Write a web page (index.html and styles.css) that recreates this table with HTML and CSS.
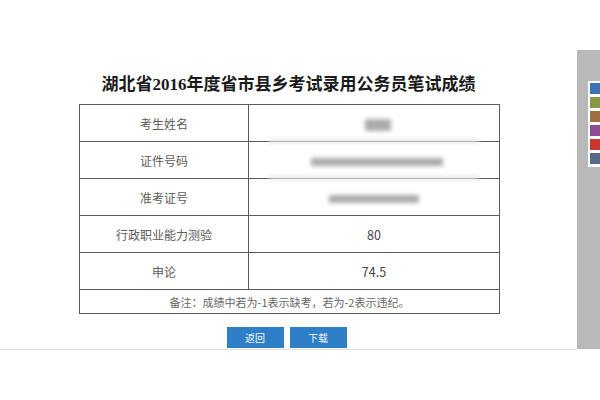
FILE: index.html
```html
<!DOCTYPE html>
<html lang="zh-CN">
<head>
<meta charset="utf-8">
<title>成绩查询</title>
<link rel="stylesheet" href="styles.css">
</head>
<body>
<div class="page">
  <div class="main">
    <h1 class="title">湖北省2016年度省市县乡考试录用公务员笔试成绩</h1>
    <table class="score">
      <tr>
        <td class="label">考生姓名</td>
        <td class="value"><span class="blur blur-name"></span></td>
      </tr>
      <tr>
        <td class="label">证件号码</td>
        <td class="value"><span class="blur blur-band"></span><span class="blur blur-id"></span></td>
      </tr>
      <tr>
        <td class="label">准考证号</td>
        <td class="value"><span class="blur blur-band"></span><span class="blur blur-no"></span></td>
      </tr>
      <tr>
        <td class="label">行政职业能力测验</td>
        <td class="value">80</td>
      </tr>
      <tr>
        <td class="label">申论</td>
        <td class="value">74.5</td>
      </tr>
      <tr class="note-row">
        <td class="note" colspan="2">备注：成绩中若为-1表示缺考，若为-2表示违纪。</td>
      </tr>
    </table>
    <div class="actions">
      <button class="btn">返回</button>
      <button class="btn">下载</button>
    </div>
  </div>
  <div class="side">
    <div class="swatches">
      <span class="sw sw-blue"></span>
      <span class="sw sw-olive"></span>
      <span class="sw sw-brown"></span>
      <span class="sw sw-purple"></span>
      <span class="sw sw-red"></span>
      <span class="sw sw-slate"></span>
    </div>
  </div>
</div>
</body>
</html>
```

FILE: styles.css
```css
html, body {
  margin: 0;
  padding: 0;
  background: #fff;
}

.page {
  display: flex;
  align-items: flex-start;
  width: 600px;
  height: 400px;
  overflow: hidden;
}

.main {
  width: 577px;
  height: 349px;
  border-bottom: 1px solid #e2e2e2;
  box-sizing: content-box;
}

.title {
  margin: 0;
  padding-top: 74px;
  height: 22px;
  line-height: 22px;
  text-align: center;
  font-family: "Liberation Serif", "Noto Sans CJK SC", serif;
  font-size: 17px;
  font-weight: 600;
  color: #1a1a1a;
  letter-spacing: 0;
}

.score {
  margin: 8px auto 0 79px;
  width: 421px;
  border-collapse: collapse;
  font-family: "Noto Sans CJK SC", "Microsoft YaHei", sans-serif;
  font-size: 12px;
  color: #5c5c5c;
}

.score td {
  border: 1px solid #5a5a5a;
  height: 36px;
  padding: 0;
  text-align: center;
  vertical-align: middle;
}

.score .label {
  width: 168px;
}

.score .value {
  position: relative;
  color: #444;
  font-size: 12.5px;
}

.score .note-row td {
  height: 23px;
  font-size: 11px;
  color: #666;
}

.blur {
  display: inline-block;
  background: #acacac;
  filter: blur(2px);
  vertical-align: middle;
}

.blur-name {
  width: 26px;
  height: 12px;
  margin-left: 8px;
}

.blur-id {
  width: 132px;
  height: 8px;
  margin-left: 6px;
}

.blur-no {
  width: 90px;
  height: 8px;
}

.blur-band {
  position: absolute;
  left: 20px;
  top: -3px;
  width: 210px;
  height: 4px;
  background: #e6e6e6;
  filter: blur(2px);
}

.actions {
  display: flex;
  justify-content: center;
  gap: 6px;
  margin-top: 13px;
  padding-right: 4px;
}

.btn {
  width: 57px;
  height: 21px;
  padding: 0;
  border: 0;
  background: #2e7fc6;
  color: #f2f6fb;
  font-family: "Noto Sans CJK SC", sans-serif;
  font-size: 10px;
  line-height: 21px;
  cursor: pointer;
}

.side {
  width: 23px;
  height: 299px;
  margin-top: 50px;
  background: #b9b9b9;
  padding-top: 31px;
  box-sizing: border-box;
}

.swatches {
  display: flex;
  flex-direction: column;
  gap: 3px;
  margin-left: 11px;
  padding: 2px 0 3px 2px;
  background: #fff;
}

.sw {
  display: block;
  height: 11px;
  width: 10px;
}

.sw-blue { background: #3b73b5; }
.sw-olive { background: #879846; }
.sw-brown { background: #a06e40; }
.sw-purple { background: #8d4b98; }
.sw-red { background: #c9372b; }
.sw-slate { background: #566b86; }
```
